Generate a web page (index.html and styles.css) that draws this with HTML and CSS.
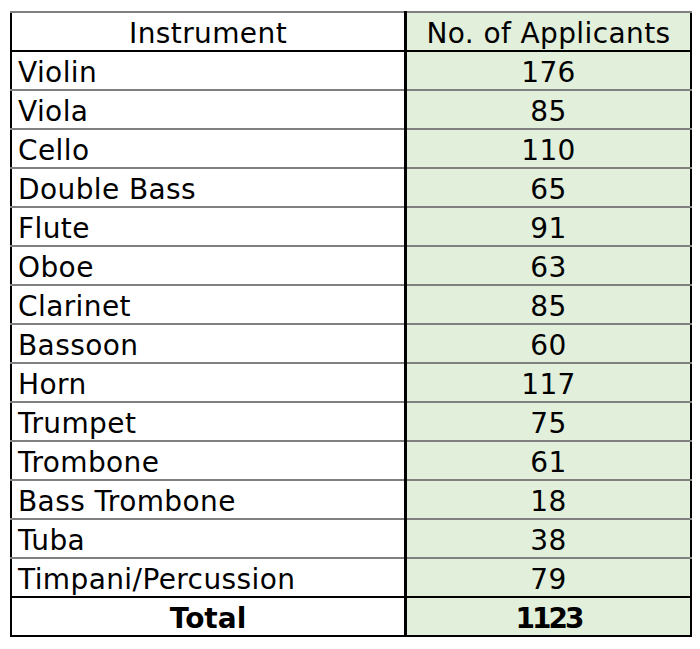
FILE: index.html
```html
<!DOCTYPE html>
<html>
<head>
<meta charset="utf-8">
<link rel="stylesheet" href="styles.css">
</head>
<body>
<table class="sheet">
  <thead>
    <tr><th class="name">Instrument</th><th class="num">No. of Applicants</th></tr>
  </thead>
  <tbody>
    <tr><td class="name">Violin</td><td class="num">176</td></tr>
    <tr><td class="name">Viola</td><td class="num">85</td></tr>
    <tr><td class="name">Cello</td><td class="num">110</td></tr>
    <tr><td class="name">Double Bass</td><td class="num">65</td></tr>
    <tr><td class="name">Flute</td><td class="num">91</td></tr>
    <tr><td class="name">Oboe</td><td class="num">63</td></tr>
    <tr><td class="name">Clarinet</td><td class="num">85</td></tr>
    <tr><td class="name">Bassoon</td><td class="num">60</td></tr>
    <tr><td class="name">Horn</td><td class="num">117</td></tr>
    <tr><td class="name">Trumpet</td><td class="num">75</td></tr>
    <tr><td class="name">Trombone</td><td class="num">61</td></tr>
    <tr><td class="name">Bass Trombone</td><td class="num">18</td></tr>
    <tr><td class="name">Tuba</td><td class="num">38</td></tr>
    <tr><td class="name">Timpani/Percussion</td><td class="num">79</td></tr>
  </tbody>
  <tfoot>
    <tr><td class="name total">Total</td><td class="num total sum">1123</td></tr>
  </tfoot>
</table>
</body>
</html>
```
FILE: styles.css
```css
html, body {
  margin: 0;
  padding: 0;
  background: #ffffff;
}
body {
  padding: 11px 0 0 10px;
  font-family: "DejaVu Sans", "Liberation Sans", sans-serif;
  color: #000;
}
.sheet {
  border-collapse: collapse;
  border: 2px solid #000;
  width: 682px;
  font-size: 28px;
  letter-spacing: 0.4px;
}
.sheet th,
.sheet td {
  height: 33px;
  padding: 4px 6px 0;
  line-height: 1;
  font-weight: normal;
  border-top: 2px solid #808080;
  vertical-align: middle;
}
.sheet .name {
  width: 380px;
  text-align: left;
}
.sheet th.name,
.sheet .total.name {
  text-align: center;
}
.sheet .num {
  text-align: center;
  background: #e2efda;
  border-left: 3px solid #000;
}
.sheet thead th {
  border-bottom: 2px solid #000;
}
.sheet tfoot td {
  border-top: 2px solid #000;
  font-weight: bold;
  letter-spacing: 0;
}
.sheet .sum {
  letter-spacing: -3px;
}
```
